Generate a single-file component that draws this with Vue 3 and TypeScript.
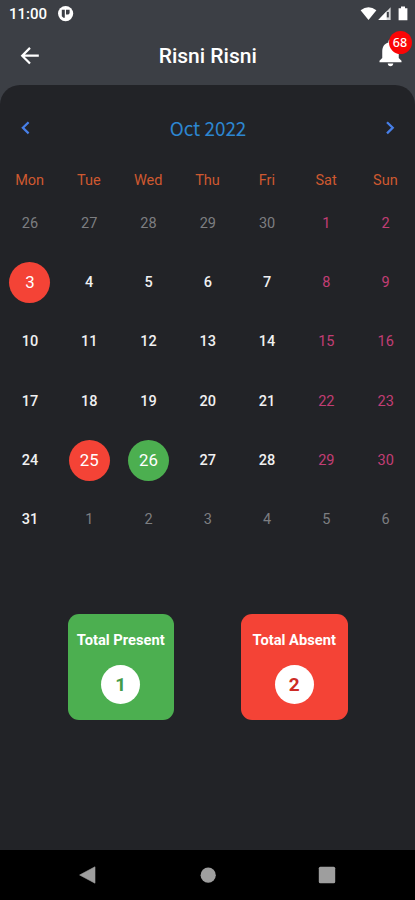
<script setup lang="ts">
type Tone = 'muted' | 'plain' | 'weekend'
interface Day {
  label: number
  tone: Tone
  mark?: 'absent' | 'present'
}

const weekdays = ['Mon', 'Tue', 'Wed', 'Thu', 'Fri', 'Sat', 'Sun']
const marks: Record<number, Day['mark']> = { 3: 'absent', 25: 'absent', 26: 'present' }

// The grid starts on Monday 26 September and runs for six weeks.
const days: Day[] = Array.from({ length: 42 }, (_, i) => {
  const n = i - 4
  if (n < 1) return { label: n + 30, tone: 'muted' }
  if (n > 31) return { label: n - 31, tone: 'muted' }
  return { label: n, tone: i % 7 > 4 ? 'weekend' : 'plain', mark: marks[n] }
})

const totals = [
  { kind: 'present', title: 'Total Present', count: 1 },
  { kind: 'absent', title: 'Total Absent', count: 2 },
]
</script>

<template>
  <div class="screen">
    <div class="status">
      <span class="clock">11:00</span>
      <svg class="app-dot" width="16" height="16" viewBox="0 0 16 16">
        <circle cx="7.6" cy="7.6" r="7.6" fill="#fff" />
        <path d="M3.8 3.8h3v8H5.4l-1.6-1.6zM8 3.8h3.6v3.4l-1.2 1.2H8z" fill="#3c3f45" />
      </svg>
      <svg class="signals" width="50" height="16" viewBox="0 0 50 16">
        <path d="M0.6 4.2Q8.5 -1.7 16.4 4.2L8.5 14z" fill="#fff" />
        <path d="M30.6 1.2V14H18.3z" fill="#d6d7d9" />
        <path d="M26.6 5.3V14H18.3z" fill="#fff" />
        <path d="M26.8 6h2v5.4h-2z" fill="#3c3f45" />
        <path d="M38.6 2.2H41V.6h4v1.6h2.4v12h-8.8z" fill="#fff" />
      </svg>
    </div>
    <header class="bar">
      <button class="icon" aria-label="Back">
        <svg width="24" height="24" viewBox="0 0 24 24"><path d="M20.8 11.7H4.6M12 3.9l-7.8 7.8 7.8 7.8" fill="none" stroke="#fff" stroke-width="2.2" /></svg>
      </button>
      <h1>Risni Risni</h1>
      <button class="icon bell" aria-label="Notifications">
        <svg width="33" height="33" viewBox="0 0 24 24"><path d="M12 22c1.1 0 2-.9 2-2h-4c0 1.1.89 2 2 2zm6-6v-5c0-3.07-1.64-5.64-4.5-6.32V4c0-.83-.67-1.5-1.5-1.5s-1.5.67-1.5 1.5v.68C7.63 5.36 6 7.92 6 11v5l-2 2v1h16v-1l-2-2z" fill="#fff" /></svg>
        <span class="badge">68</span>
      </button>
    </header>

    <main class="sheet">
      <div class="month">
        <button class="icon" aria-label="Previous month">
          <svg width="12" height="16" viewBox="0 0 12 16"><path d="M9.6 2.2L3.9 7.8l5.7 5.6" fill="none" stroke="#477fe8" stroke-width="2.3" /></svg>
        </button>
        <h2>Oct 2022</h2>
        <button class="icon" aria-label="Next month">
          <svg width="12" height="16" viewBox="0 0 12 16"><path d="M3 2.2l5.7 5.6L3 13.4" fill="none" stroke="#477fe8" stroke-width="2.3" /></svg>
        </button>
      </div>
      <div class="week">
        <span v-for="w in weekdays" :key="w">{{ w }}</span>
      </div>
      <div class="days">
        <div v-for="(d, i) in days" :key="i" class="cell">
          <span class="day" :class="[d.tone, d.mark, { marked: d.mark }]">{{ d.label }}</span>
        </div>
      </div>
      <section class="totals">
        <article v-for="t in totals" :key="t.kind" class="card" :class="t.kind">
          <h3>{{ t.title }}</h3>
          <span class="count">{{ t.count }}</span>
        </article>
      </section>
    </main>

    <nav class="system">
      <svg width="18" height="18" viewBox="0 0 18 18"><path d="M16 .8v16.4L.6 9z" fill="#9e9e9e" stroke="#9e9e9e" stroke-width=".6" stroke-linejoin="round" /></svg>
      <svg width="18" height="18" viewBox="0 0 18 18"><circle cx="9.2" cy="9.2" r="7.6" fill="#9e9e9e" /></svg>
      <svg width="18" height="18" viewBox="0 0 18 18"><rect x=".8" y=".8" width="16.4" height="16.4" rx="1.5" fill="#9e9e9e" /></svg>
    </nav>
  </div>
</template>

<style>
body {
  background: #3c3f45;
}
</style>

<style scoped>
.screen {
  display: flex;
  flex-direction: column;
  height: 900px;
  background: #3c3f45;
  color: #fff;
  font-family: Roboto, 'Liberation Sans', sans-serif;
}
h1,
h2,
h3 {
  margin: 0;
}
.icon {
  display: flex;
  padding: 0;
  border: 0;
  background: none;
  font-family: inherit;
}
.status {
  display: flex;
  align-items: center;
  height: 27px;
  padding: 0 5px 0 9px;
}
.clock {
  width: 49px;
  padding-top: 1px;
  font-size: 15px;
  font-weight: 500;
  line-height: 27px;
}
.signals {
  margin-left: auto;
}
.bar {
  display: flex;
  align-items: center;
  justify-content: space-between;
  height: 58px;
  padding: 0 8.5px 0 18px;
}
h1 {
  font-size: 21px;
  font-weight: 500;
  line-height: 58px;
}
.bell {
  position: relative;
  margin-top: -7px;
}
.badge {
  position: absolute;
  top: -5px;
  left: 15px;
  width: 23px;
  height: 23px;
  border-radius: 50%;
  background: #fb0606;
  color: #fff;
  font: 500 12.5px/23px 'Noto Sans', sans-serif;
  text-align: center;
}
.sheet {
  flex: 1;
  border-radius: 20px 20px 0 0;
  background: #222327;
}
.month {
  display: flex;
  align-items: center;
  justify-content: space-between;
  height: 86px;
  padding: 0 19px;
}
h2 {
  padding-left: 1px;
  color: #2d86d0;
  font: 400 18.9px/86px 'Noto Sans CJK SC', sans-serif;
}
.week,
.days {
  display: grid;
  grid-template-columns: repeat(7, 1fr);
}
.week {
  height: 22.6px;
  color: #cf5930;
  font-size: 14.5px;
  line-height: 20px;
  text-align: center;
}
.days {
  grid-auto-rows: 59.35px;
}
.cell {
  display: flex;
  align-items: center;
  justify-content: center;
  padding-left: 0.6px;
}
.day {
  width: 41px;
  height: 41px;
  border-radius: 50%;
  font-size: 14.5px;
  line-height: 41px;
  text-align: center;
}
.muted {
  color: #7d7e81;
}
.plain {
  color: #f0f0f1;
  font-weight: 500;
}
.weekend {
  color: #c23e75;
}
.marked {
  color: #fff;
  font-size: 16.8px;
  font-weight: 400;
}
.absent {
  background: #f44336;
}
.present {
  background: #4caf50;
}
.totals {
  display: flex;
  justify-content: center;
  gap: 67px;
  padding-top: 64.5px;
}
.card {
  display: flex;
  flex-direction: column;
  align-items: center;
  width: 106.5px;
  height: 106px;
  border-radius: 11px;
}
h3 {
  padding-top: 16px;
  font-size: 14.7px;
  font-weight: 700;
  line-height: 20px;
  white-space: nowrap;
}
.count {
  width: 39px;
  height: 39px;
  margin-top: 14.5px;
  border-radius: 50%;
  background: #fff;
  font-size: 19px;
  font-weight: 700;
  line-height: 39px;
  text-align: center;
}
.card.present .count {
  color: #449b48;
}
.card.absent .count {
  color: #cd2b25;
}
.system {
  display: flex;
  align-items: center;
  justify-content: space-between;
  height: 50.5px;
  padding: 0 79px;
  background: #000;
}
</style>
